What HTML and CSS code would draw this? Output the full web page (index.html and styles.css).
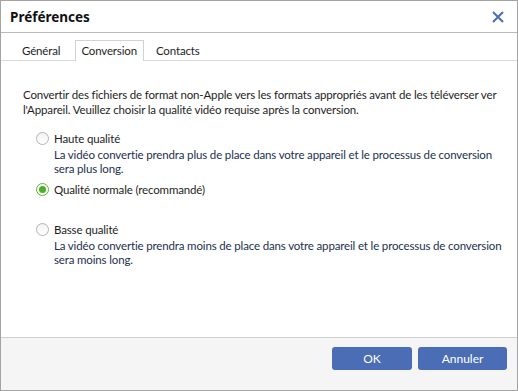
FILE: index.html
```html
<!DOCTYPE html>
<html lang="fr">
<head>
  <meta charset="UTF-8" />
  <title>Préférences</title>
  <link rel="stylesheet" href="styles.css">
</head>
<body>
  <div class="dialog">
    <header class="dialog-header">
      <span class="dialog-title">Préférences</span>
      <button class="close-btn" aria-label="Fermer">
        <svg width="12" height="12" viewBox="0 0 12 12">
          <path d="M1 1 L11 11 M11 1 L1 11" stroke="#4a6db5" stroke-width="2" fill="none" />
        </svg>
      </button>
    </header>

    <!-- Tabs -->
    <div class="tabs">
      <div class="tab">Général</div>
      <div class="tab active">Conversion</div>
      <div class="tab">Contacts</div>
    </div>

    <div class="content">
      <p class="intro">Convertir des fichiers de format non-Apple vers les formats appropriés avant de les téléverser ver l'Appareil. Veuillez choisir la qualité vidéo requise après la conversion.</p>

      <div class="option">
        <div class="option-row"><span class="radio"></span>Haute qualité</div>
        <div class="option-desc">La vidéo convertie prendra plus de place dans votre appareil et le processus de conversion sera plus long.</div>
      </div>

      <div class="option">
        <div class="option-row"><span class="radio checked"></span>Qualité normale (recommandé)</div>
      </div>

      <div class="option option-low">
        <div class="option-row"><span class="radio"></span>Basse qualité</div>
        <div class="option-desc">La vidéo convertie prendra moins de place dans votre appareil et le processus de conversion sera moins long.</div>
      </div>
    </div>

    <footer class="dialog-footer">
      <button class="btn btn-ok">OK</button>
      <button class="btn btn-cancel">Annuler</button>
    </footer>
  </div>
</body>
</html>
```

FILE: styles.css
```css
body {
  margin: 0;
  padding: 0;
  background: #ffffff;
  font-family: Lato, "Noto Sans", sans-serif;
  font-size: 11.5px;
  letter-spacing: -0.15px;
  color: #1e1e1e;
}

.dialog {
  box-sizing: border-box;
  width: 518px;
  height: 391px;
  border: 1px solid #a3a3a3;
  display: flex;
  flex-direction: column;
  background: white;
}

.dialog-header {
  height: 31px;
  border-bottom: 1px solid #b9b9b9;
  display: flex;
  align-items: center;
  justify-content: space-between;
  padding: 0 9px 0 9px;
}

.dialog-title {
  font-family: "Noto Sans", sans-serif;
  font-size: 13.5px;
  font-weight: bold;
  letter-spacing: 0;
  color: #111;
}

.close-btn {
  background: none;
  border: none;
  padding: 0;
  width: 12px;
  height: 12px;
  margin-right: 4px;
  cursor: pointer;
}

.close-btn svg {
  display: block;
}

.tabs {
  display: flex;
  padding: 7px 0 0 9px;
  border-bottom: 1px solid #d9d9d9;
  height: 20px;
}

.tab {
  padding: 0 11px;
  line-height: 20px;
  border: 1px solid transparent;
  border-bottom: none;
  color: #1e1e1e;
}

.tab.active {
  border-color: #d2d2d2;
  background: white;
  padding: 0 6px 0 5px;
  margin: 0 0 -1px 3px;
}

.content {
  flex: 1;
  padding: 26px 14px 0 22px;
}

.intro {
  margin: 0 0 14px 0;
  line-height: 15px;
}

.option {
  padding-left: 13px;
  margin-bottom: 6px;
}

.option-low {
  margin-top: 25px;
}

.option-row {
  display: flex;
  align-items: center;
  line-height: 15px;
}

.option-desc {
  padding-left: 18px;
  line-height: 14px;
  color: #22304f;
  margin-top: 2px;
}

.radio {
  box-sizing: border-box;
  width: 13px;
  height: 13px;
  border-radius: 50%;
  border: 1px solid #b4b4b4;
  background: linear-gradient(#f2f2f2, #ffffff);
  margin-right: 5px;
  position: relative;
}

.radio.checked {
  border-color: #5cb82e;
  background: white;
}

.radio.checked::after {
  content: "";
  position: absolute;
  left: 2px;
  top: 2px;
  width: 7px;
  height: 7px;
  border-radius: 50%;
  background: #4caf2a;
}

.dialog-footer {
  height: 43px;
  border-top: 1px solid #d0d0d0;
  background: #f5f5f5;
  display: flex;
  justify-content: flex-end;
  align-items: flex-start;
  gap: 6px;
  padding: 9px 10px 0 0;
}

.btn {
  font-family: inherit;
  font-size: 12px;
  background-color: #4a6db5;
  color: white;
  border: none;
  border-radius: 3px;
  height: 23px;
  cursor: pointer;
}

.btn-ok {
  width: 80px;
}

.btn-cancel {
  width: 89px;
}
```
